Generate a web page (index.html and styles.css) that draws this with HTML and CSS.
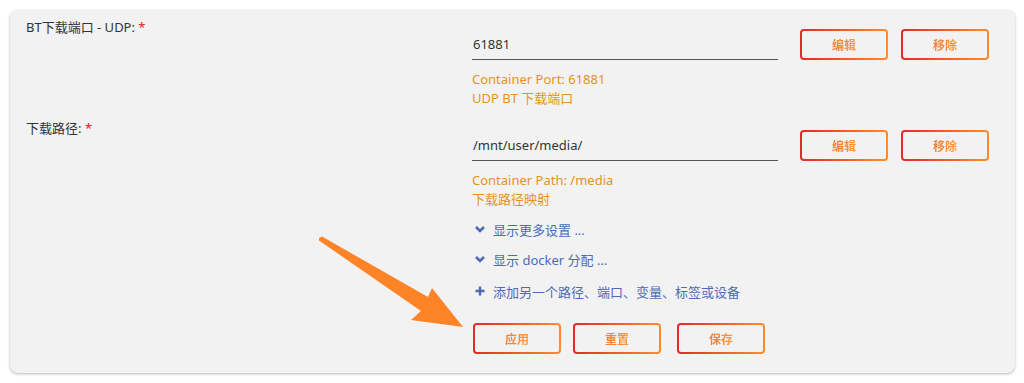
FILE: index.html
```html
<!DOCTYPE html>
<html lang="zh-CN">
<head>
    <meta charset="UTF-8">
    <meta name="viewport" content="width=device-width, initial-scale=1.0">
    <title>Docker 设置</title>
    <link rel="stylesheet" href="styles.css">
</head>
<body>
    <div class="card">
        <div class="row">
            <div class="label">BT下载端口 - UDP: <span class="req">*</span></div>
            <div class="content">
                <div class="field">
                    <div class="input">61881</div>
                    <button class="btn"><span>编辑</span></button>
                    <button class="btn"><span>移除</span></button>
                </div>
                <div class="hint">
                    <div>Container Port: 61881</div>
                    <div>UDP BT 下载端口</div>
                </div>
            </div>
        </div>

        <div class="row">
            <div class="label">下载路径: <span class="req">*</span></div>
            <div class="content">
                <div class="field">
                    <div class="input">/mnt/user/media/</div>
                    <button class="btn"><span>编辑</span></button>
                    <button class="btn"><span>移除</span></button>
                </div>
                <div class="hint">
                    <div>Container Path: /media</div>
                    <div>下载路径映射</div>
                </div>
                <div class="links">
                    <a class="link" href="#">
                        <svg class="ico" viewBox="0 0 10 10"><path d="M1 3 L5 7 L9 3" fill="none" stroke="currentColor" stroke-width="2.6"/></svg>
                        显示更多设置 ...
                    </a>
                    <a class="link" href="#">
                        <svg class="ico" viewBox="0 0 10 10"><path d="M1 3 L5 7 L9 3" fill="none" stroke="currentColor" stroke-width="2.6"/></svg>
                        显示 docker 分配 ...
                    </a>
                    <a class="link link-add" href="#">
                        <svg class="ico" viewBox="0 0 10 10"><path d="M5 0.5 V9.5 M0.5 5 H9.5" fill="none" stroke="currentColor" stroke-width="2.4"/></svg>
                        添加另一个路径、端口、变量、标签或设备
                    </a>
                </div>
                <div class="actions">
                    <button class="btn"><span>应用</span></button>
                    <button class="btn"><span>重置</span></button>
                    <button class="btn btn-last"><span>保存</span></button>
                </div>
            </div>
        </div>
    </div>

    <!-- annotation arrow pointing at the apply button -->
    <svg class="arrow" viewBox="0 0 1024 383">
        <polygon fill="#ff8427" points="319,238 322,236.5 428,297 432,288 463,327 411,320 421,311 319,240.5"/>
    </svg>
</body>
</html>
```

FILE: styles.css
```css
body {
    margin: 0;
    padding: 10px 9px 10px 10px;
    background: #ffffff;
    font-family: "Noto Sans", "Noto Sans CJK SC", sans-serif;
    font-size: 13px;
    color: #333333;
    position: relative;
}
.card {
    background: #f2f2f2;
    border-radius: 8px;
    box-shadow: 0 1px 3px rgba(0,0,0,0.28);
    padding: 7px 16px 20px 16px;
    height: 363px;
    box-sizing: border-box;
}
.row {
    display: grid;
    grid-template-columns: 446px 1fr;
}
.row + .row {
    margin-top: 10px;
}
.label {
    line-height: 20px;
}
.req {
    color: #e02020;
}
.content {
    padding-top: 12px;
}
.field {
    display: flex;
    align-items: center;
}
.input {
    width: 306px;
    height: 30px;
    box-sizing: border-box;
    border-bottom: 1px solid #555555;
    line-height: 29px;
    padding-left: 1px;
    margin-right: 22px;
    font-size: 13px;
    color: #333333;
}
.btn {
    width: 88px;
    height: 31px;
    border: 2px solid transparent;
    border-radius: 4px;
    background: linear-gradient(#f2f2f2, #f2f2f2) padding-box,
                linear-gradient(90deg, #e22a2a, #ff8c2c) border-box;
    font-family: "Noto Sans", "Noto Sans CJK SC", sans-serif;
    font-size: 12px;
    font-weight: bold;
    padding: 0;
    margin-right: 13px;
    cursor: pointer;
}
.btn span {
    background: linear-gradient(90deg, #f27c3a, #ff9a33);
    -webkit-background-clip: text;
    background-clip: text;
    color: transparent;
}
.hint {
    margin-top: 10px;
    color: #e8921c;
    line-height: 19px;
}
.links {
    margin-top: 10px;
}
.link {
    display: flex;
    align-items: center;
    color: #4a6cb8;
    text-decoration: none;
    height: 20px;
    margin-bottom: 10px;
    padding-left: 3px;
}
.link-add {
    margin-top: 12px;
}
.ico {
    width: 10px;
    height: 10px;
    margin-right: 8px;
}
.actions {
    display: flex;
    margin-top: 22px;
    padding-left: 1px;
}
.actions .btn {
    margin-right: 12px;
}
.actions .btn:nth-child(2) {
    margin-right: 16px;
}
.arrow {
    position: absolute;
    left: 0;
    top: 0;
    width: 1024px;
    height: 383px;
    pointer-events: none;
}
```
